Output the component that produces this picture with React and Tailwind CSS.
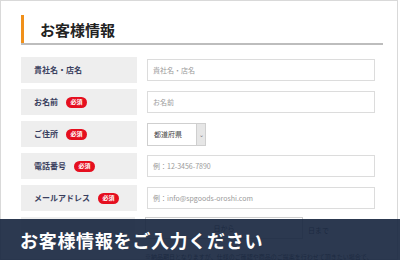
import React from "react";

const F = { fontFamily: '"Noto Sans CJK JP", "Noto Sans", sans-serif' };

function Badge() {
  return (
    <span className="ml-[8px] inline-flex h-[11px] w-[21px] items-center justify-center rounded-full bg-[#e50f1f] text-[6px] font-bold leading-none text-white">
      必須
    </span>
  );
}

function Row({ label, req, children }) {
  return (
    <div className="flex h-[26px] items-center">
      <div className="flex h-full w-[116px] shrink-0 items-center bg-[#eeeeee] pl-[13px]">
        <span className="text-[8px] font-bold leading-none text-[#3a3f5e]">{label}</span>
        {req && <Badge />}
      </div>
      <div className="ml-[10px] flex h-full flex-1 items-center">{children}</div>
    </div>
  );
}

function Input({ ph }) {
  return (
    <div className="flex h-[22px] w-[228px] items-center border border-[#dcdcdc] bg-white pl-[5px] text-[7px] text-[#9a9a9a]">
      {ph}
    </div>
  );
}

export default function App() {
  return (
    <div style={F} className="relative h-[260px] w-[400px] overflow-hidden bg-white">
      <div className="h-[260px] w-[398px] border border-[#d9d9d9] bg-white">
        <div className="pl-[20px] pt-[14px]">
          <div className="flex h-[30px] w-[362px] items-center border-b-2 border-[#bdbdbd]">
            <div className="h-full w-[3px] bg-[#f0901a]" />
            <span className="ml-[16px] text-[15px] font-bold leading-none text-[#222]">お客様情報</span>
          </div>
          <div className="mt-[12px] flex flex-col gap-[6px]">
            <Row label="貴社名・店名"><Input ph="貴社名・店名" /></Row>
            <Row label="お名前" req><Input ph="お名前" /></Row>
            <Row label="ご住所" req>
              <div className="flex h-[23px] w-[59px] items-center border border-[#cfcfcf] bg-white">
                <span className="flex-1 pl-[6px] text-[7px] text-[#444]">都道府県</span>
                <span className="flex h-full w-[9px] items-center justify-center border-l border-[#cfcfcf] bg-[#e6e6e6] text-[6px] text-[#777]">⌄</span>
              </div>
            </Row>
            <Row label="電話番号" req><Input ph="例：12-3456-7890" /></Row>
            <Row label="メールアドレス" req><Input ph="例：info@spgoods-oroshi.com" /></Row>
            <div className="flex h-[26px]">
              <div className="h-full w-[114px] bg-[#eeeeee]" />
              <div className="ml-[10px] flex h-[22px] w-[158px] items-center justify-center border border-[#cfcfcf] text-[7px] text-[#666]">日から</div>
              <span className="ml-[5px] self-center text-[7px] text-[#666]">日まで</span>
            </div>
            <div className="ml-[124px] mt-[4px] w-[230px] text-[6px] leading-[7px] text-[#666]">
              ※納品期日となりますが、仕様のご確認や商品のご提案を行わせて頂きたい場合で、専門
            </div>
          </div>
        </div>
      </div>
      <div className="absolute bottom-0 left-0 flex h-[41px] w-full items-center bg-[#15233d]/[0.9] pl-[20px]">
        <span className="text-[18px] font-bold leading-none tracking-[0.7px] text-white">お客様情報をご入力ください</span>
      </div>
    </div>
  );
}
